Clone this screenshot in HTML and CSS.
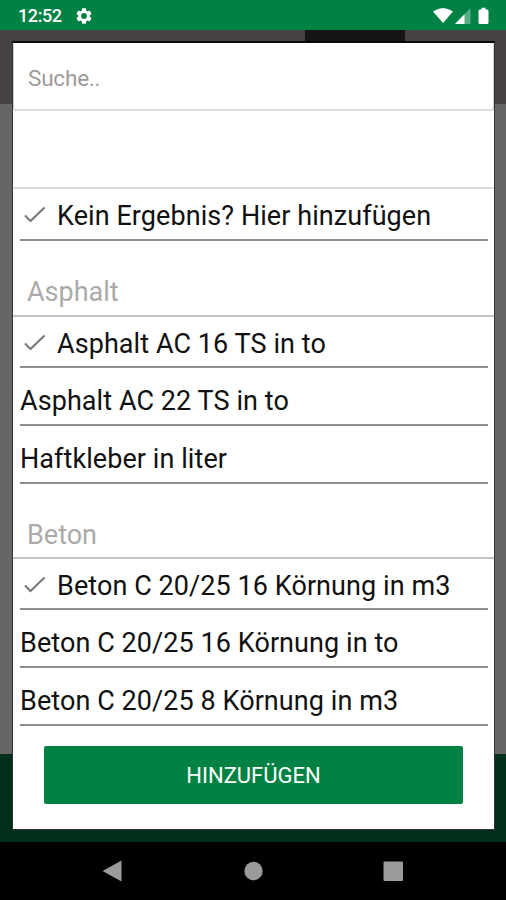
FILE: index.html
```html
<!DOCTYPE html>
<html lang="de">
<head>
<meta charset="utf-8">
<title>Material</title>
<link rel="stylesheet" href="styles.css">
</head>
<body>
<div class="phone">
  <header class="status">
    <span class="clock">12:52</span>
    <svg class="gear" viewBox="2 2 20 20"><path fill="#fff" d="M19.14 12.94c.04-.3.06-.61.06-.94 0-.32-.02-.64-.07-.94l2.03-1.58c.18-.14.23-.41.12-.61l-1.92-3.32c-.12-.22-.37-.29-.59-.22l-2.39.96c-.5-.38-1.03-.7-1.62-.94l-.36-2.54c-.04-.24-.24-.41-.48-.41h-3.84c-.24 0-.43.17-.47.41l-.36 2.54c-.59.24-1.13.57-1.62.94l-2.39-.96c-.22-.08-.47 0-.59.22L2.74 8.87c-.12.21-.08.47.12.61l2.03 1.58c-.05.3-.09.63-.09.94s.02.64.07.94l-2.03 1.58c-.18.14-.23.41-.12.61l1.92 3.32c.12.22.37.29.59.22l2.39-.96c.5.38 1.03.7 1.62.94l.36 2.54c.05.24.24.41.48.41h3.84c.24 0 .44-.17.47-.41l.36-2.54c.59-.24 1.13-.56 1.62-.94l2.39.96c.22.08.47 0 .59-.22l1.92-3.32c.12-.22.07-.47-.12-.61l-2.01-1.58zM12 15.6A3.6 3.6 0 1 1 12 8.4a3.6 3.6 0 0 1 0 7.2z"/></svg>
    <svg class="signals" viewBox="0 0 58 18">
      <path fill="#fff" d="M0 4.6Q10 -2.6 20 4.6L10 16Z"/>
      <path fill="#fff" opacity=".35" d="M37.500 1V17H22Z"/>
      <path fill="#fff" d="M31.500 7.200V17H22Z"/>
      <path fill="#fff" d="M48.500 .7h4v1.800h1.500q1.500 0 1.500 1.500v11.500q0 1.500-1.500 1.500h-7q-1.500 0-1.500-1.500v-11.500q0-1.500 1.500-1.500h1.500z"/>
    </svg>
  </header>
  <main class="backdrop">
    <div class="dialog">
      <div class="search">Suche..</div>
      <div class="gap"></div>
      <div class="row first top"><svg class="check" viewBox="0 0 22 18"><path d="M1 9.500 6.500 15 20.500 1.500"/></svg><span>Kein Ergebnis? Hier hinzufügen</span></div>
      <div class="group">Asphalt</div>
      <div class="row first"><svg class="check" viewBox="0 0 22 18"><path d="M1 9.500 6.500 15 20.500 1.500"/></svg><span>Asphalt AC 16 TS in to</span></div>
      <div class="row"><span>Asphalt AC 22 TS in to</span></div>
      <div class="row"><span>Haftkleber in liter</span></div>
      <div class="group short">Beton</div>
      <div class="row first"><svg class="check" viewBox="0 0 22 18"><path d="M1 9.500 6.500 15 20.500 1.500"/></svg><span>Beton C 20/25 16 Körnung in m3</span></div>
      <div class="row"><span>Beton C 20/25 16 Körnung in to</span></div>
      <div class="row"><span>Beton C 20/25 8 Körnung in m3</span></div>
      <div class="button">HINZUFÜGEN</div>
    </div>
  </main>
  <nav class="nav">
    <svg viewBox="0 0 506 58"><path fill="#9b9b9b" d="M121.500 18.500V39.500L102.500 29Z"/><circle fill="#9b9b9b" cx="253.500" cy="29" r="9.200"/><rect fill="#9b9b9b" x="383.500" y="19.500" width="19.500" height="19.500" rx="1"/></svg>
  </nav>
</div>
</body>
</html>
```
FILE: styles.css
```css
* { box-sizing: border-box; }
body { margin: 0; font-family: Roboto, sans-serif; }
.phone { width: 506px; height: 900px; display: flex; flex-direction: column; overflow: hidden; }
.status { height: 30px; background: #008244; display: flex; align-items: center; padding: 1px 16px 0 18px; color: #fff; }
.clock { font-size: 18px; font-weight: 500; line-height: 30px; width: 58px; letter-spacing: -0.4px; }
.gear { width: 16px; height: 16px; }
.signals { width: 58px; height: 18px; margin-left: auto; margin-right: -1px; }
.backdrop {
  height: 812px;
  padding: 11px 11px 12px 12px;
  background:
    linear-gradient(#171416, #171416) 305px 0 / 100px 12px no-repeat,
    linear-gradient(#464243 0 74px, #666 74px 724px, #00301a 724px);
}
.dialog {
  height: 789px;
  background: #fff;
  border: 1px solid #333;
  border-top: 2px solid #080808;
  display: flex;
  flex-direction: column;
}
.search { height: 68px; border: 1px solid #ccc; border-top: 0; border-bottom: 2px solid #dcdcdc; border-radius: 3px; padding-left: 14px; font-size: 22.5px; line-height: 71px; letter-spacing: -0.2px; color: #9c9c9c; }
.gap { height: 78px; border-bottom: 2px solid #dcdcdc; }
.row { height: 58px; margin: 0 6px 0 7px; border-bottom: 2px solid #8d8d8d; display: flex; align-items: center; font-size: 27px; letter-spacing: 0.07px; line-height: 30px; color: #111; white-space: nowrap; padding-top: 10px; }
.row.first { height: 51px; padding-top: 5px; }
.row.first.top { height: 52px; padding-top: 4px; }
.check { width: 22px; height: 18px; margin: -2px 11px 0 4px; fill: none; stroke: #777; stroke-width: 2; }
.group { height: 76px; border-bottom: 2px solid #c4c4c4; padding: 25px 0 0 14px; font-size: 27px; line-height: 52px; color: #aaa; }
.group.short { height: 75px; }
.button { margin: 20px 31px 0; height: 58px; background: #008244; border-radius: 2px; color: #fff; font-size: 22px; line-height: 60px; text-align: center; }
.nav { height: 58px; background: #000; }
.nav svg { display: block; width: 506px; height: 58px; }
```
